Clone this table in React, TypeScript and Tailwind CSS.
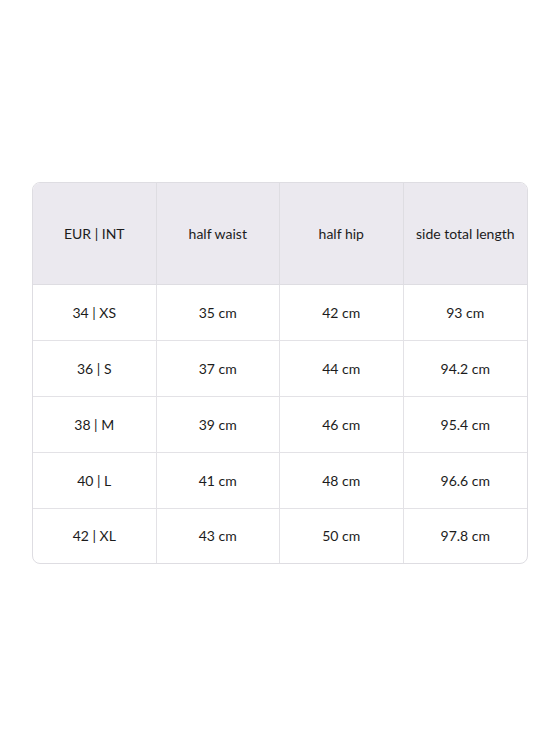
const headers = ["EUR | INT", "half waist", "half hip", "side total length"];

const rows = [
  ["34 | XS", "35 cm", "42 cm", "93 cm"],
  ["36 | S", "37 cm", "44 cm", "94.2 cm"],
  ["38 | M", "39 cm", "46 cm", "95.4 cm"],
  ["40 | L", "41 cm", "48 cm", "96.6 cm"],
  ["42 | XL", "43 cm", "50 cm", "97.8 cm"],
];

export default function App() {
  return (
    <div
      className="min-h-screen w-full bg-white flex items-center px-8"
      style={{ fontFamily: "Lato, 'Noto Sans', sans-serif" }}
    >
      <div className="w-full border border-[#dedde2] rounded-lg overflow-hidden text-[14px] text-[#1c1c1c]">
        <div className="grid grid-cols-4 bg-[#ebe9ef] border-b border-[#dedde2]">
          {headers.map((h, i) => (
            <div
              key={h}
              className={`h-[101px] pb-[1px] flex items-center justify-center text-center ${i < 3 ? "border-r border-[#dedde2]" : ""}`}
            >
              {h}
            </div>
          ))}
        </div>
        {rows.map((r, ri) => {
          const last = ri === rows.length - 1;
          return (
            <div
              key={r[0]}
              className={`grid grid-cols-4 ${last ? "" : "border-b border-[#e3e2e6]"}`}
            >
              {r.map((c, i) => (
                <div
                  key={i}
                  className={`${last ? "h-[54px]" : "h-[55px]"} pb-[1px] flex items-center justify-center text-center ${i < 3 ? "border-r border-[#e3e2e6]" : ""}`}
                >
                  {c}
                </div>
              ))}
            </div>
          );
        })}
      </div>
    </div>
  );
}
